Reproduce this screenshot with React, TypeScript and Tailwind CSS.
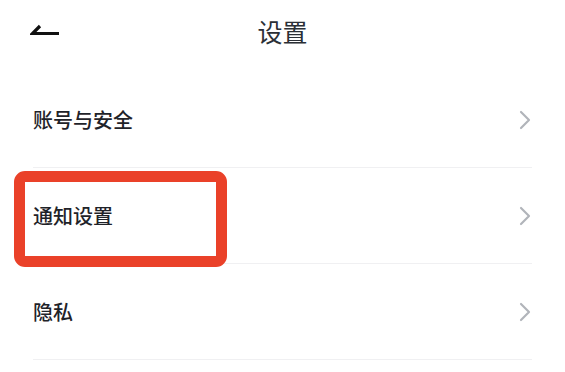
import { ChevronRight } from "lucide-react";

const items = ["账号与安全", "通知设置", "隐私"];

function BackArrow() {
  return (
    <svg width="32" height="14" viewBox="0 0 32 14" fill="none">
      <path
        d="M10 2 L2.5 9.5 H29"
        stroke="#111"
        strokeWidth="3.2"
        strokeLinecap="butt"
        strokeLinejoin="miter"
      />
    </svg>
  );
}

export default function App() {
  return (
    <div
      className="relative h-[372px] w-[565px] overflow-hidden bg-white text-[#1f2329]"
      style={{ fontFamily: '"Noto Sans CJK SC", "Noto Sans", sans-serif' }}
    >
      {/* Header */}
      <header className="relative flex h-[72px] items-center justify-center">
        <div className="absolute left-[30px] top-[24px]">
          <BackArrow />
        </div>
        <h1 className="pb-[9px] text-[25px] font-normal text-[#2b2f36]">设置</h1>
      </header>

      {/* List */}
      <div className="pl-[33px] pr-[33px]">
        {items.map((label) => (
          <div
            key={label}
            className="flex h-[96px] items-center justify-between border-b border-[#f0f0f2]"
          >
            <span className="text-[20px] font-medium leading-none">{label}</span>
            <ChevronRight
              size={32}
              strokeWidth={1.6}
              className="mr-[-9px] text-[#b1b4ba]"
            />
          </div>
        ))}
      </div>

      {/* Highlight annotation */}
      <div className="pointer-events-none absolute left-[14px] top-[171px] h-[96px] w-[213px] rounded-[11px] border-[11px] border-[#ea4129]" />
    </div>
  );
}
